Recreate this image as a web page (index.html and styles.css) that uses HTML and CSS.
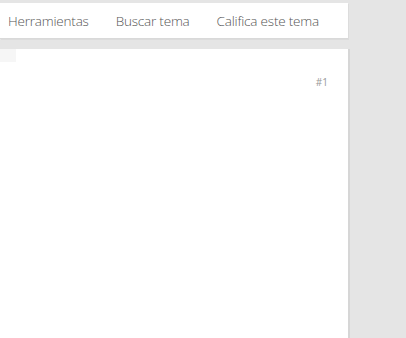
FILE: index.html
```html
<!DOCTYPE html>
<html>
<head>
    <meta charset="UTF-8">
    <title>Tema</title>
    <link rel="stylesheet" href="styles.css">
</head>
<body>
    <div class="wrap">
        <ul class="toolbar">
            <li>Herramientas</li>
            <li>Buscar tema</li>
            <li>Califica este tema</li>
        </ul>

        <div class="post">
            <div class="post-tab"></div>
            <div class="post-num">#1</div>
        </div>
    </div>
</body>
</html>
```
FILE: styles.css
```css
body {
    font-family: "Open Sans", Arial, sans-serif;
    margin: 0;
    background-color: #e5e5e5;
}

.wrap {
    width: 348px;
    padding-top: 3px;
}

.toolbar {
    list-style: none;
    margin: 0;
    padding: 0 0 0 8px;
    height: 35px;
    display: flex;
    align-items: center;
    gap: 27px;
    background-color: #fff;
    border-bottom: 1px solid #d9d9d9;
    box-shadow: 1px 1px 0 #dcdcdc;
}

.toolbar li {
    font-size: 13.5px;
    font-weight: 300;
    letter-spacing: -0.2px;
    color: #555;
}

.post {
    margin-top: 10px;
    height: 289px;
    background-color: #fff;
    box-shadow: 2px 0 0 #d6d6d6;
    position: relative;
}

.post-tab {
    width: 16px;
    height: 13px;
    background-color: #f6f6f6;
}

.post-num {
    position: absolute;
    top: 26px;
    right: 20px;
    font-size: 10px;
    color: #999;
}
```
